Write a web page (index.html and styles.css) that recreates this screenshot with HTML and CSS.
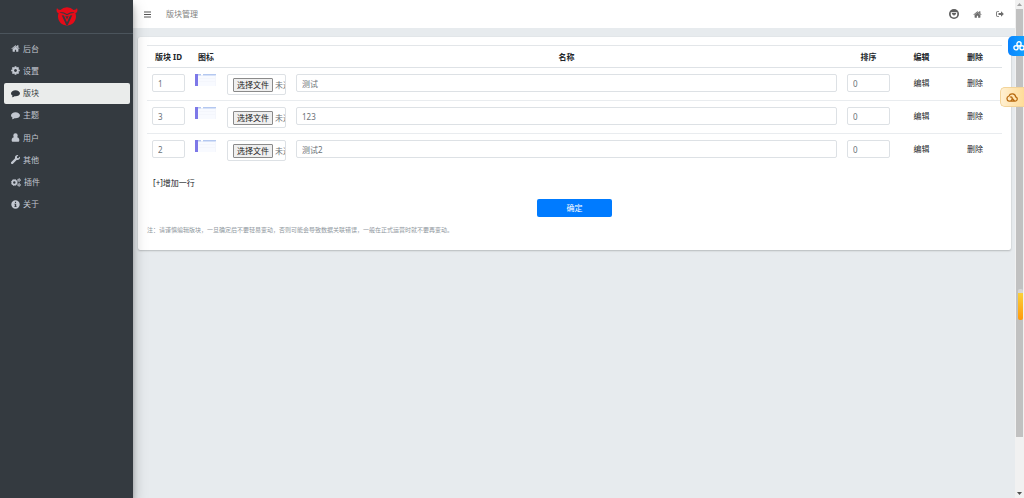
FILE: index.html
```html
<!DOCTYPE html>
<html lang="zh-CN">
<head>
    <meta charset="UTF-8">
    <meta name="viewport" content="width=device-width, initial-scale=1.0">
    <title>版块管理</title>
    <link rel="stylesheet" href="styles.css">
</head>
<body>
    <!-- Shared icons -->
    <svg class="sprite" aria-hidden="true">
        <symbol id="i-home" viewBox="0 0 1792 1792"><path d="M1472 992v480q0 26-19 45t-45 19h-384v-384h-256v384h-384q-26 0-45-19t-19-45v-480q0-1 .5-3t.5-3l575-474 575 474q1 2 1 6zm223-69l-62 74q-8 9-21 11h-3q-13 0-21-7l-692-577-692 577q-12 8-24 7-13-2-21-11l-62-74q-8-10-7-23.500t11-21.500l719-599q32-26 76-26t76 26l244 204v-195q0-14 9-23t23-9h192q14 0 23 9t9 23v408l219 182q10 8 11 21.500t-7 23.500z"/></symbol>
        <symbol id="i-cog" viewBox="100 100 1592 1592"><path d="M1152 896q0-106-75-181t-181-75-181 75-75 181 75 181 181 75 181-75 75-181zm512-109v222q0 12-8 23t-20 13l-185 28q-19 54-39 91 35 50 107 138 10 12 10 25t-9 23q-27 37-99 108t-94 71q-12 0-26-9l-138-108q-44 23-91 38-16 136-29 186-7 28-36 28h-222q-14 0-24.500-8.500t-11.500-21.500l-28-184q-49-16-90-37l-141 107q-10 9-25 9-14 0-25-11-126-114-165-168-7-10-7-23 0-12 8-23 15-21 51-66.500t54-70.500q-27-50-41-99l-183-27q-13-2-21-12.500t-8-23.500v-222q0-12 8-23t19-13l186-28q14-46 39-92-40-57-107-138-10-12-10-24 0-10 9-23 26-36 98.500-107.500t94.500-71.500q13 0 26 10l138 107q44-23 91-38 16-136 29-186 7-28 36-28h222q14 0 24.500 8.500t11.500 21.500l28 184q49 16 90 37l142-107q9-9 24-9 13 0 25 10 129 119 165 170 7 8 7 22 0 12-8 23-15 21-51 66.500t-54 70.500q26 50 41 98l183 28q13 2 21 12.500t8 23.500z"/></symbol>
        <symbol id="i-comment" viewBox="0 0 16 16"><path d="M8 2C3.600 2 0 4.500 0 7.700c0 1.800 1.100 3.400 2.900 4.400-.2 1-.8 1.900-1.500 2.700 2-.2 3.600-.9 4.800-1.900.6.100 1.200.2 1.800.2 4.400 0 8-2.400 8-5.400S12.400 2 8 2z"/></symbol>
        <symbol id="i-user" viewBox="0 0 16 16"><path d="M8 .5a3.900 3.900 0 0 1 3.900 3.900c0 1.200-.4 2.200-1.100 3 2.600.3 4 2.300 4 5.300 0 1.700-.9 2.800-2.400 2.800H3.600c-1.500 0-2.400-1.100-2.400-2.800 0-3 1.400-5 4-5.300-.7-.8-1.100-1.800-1.100-3A3.900 3.900 0 0 1 8 .5z"/></symbol>
        <symbol id="i-wrench" viewBox="0 0 512 512"><path d="M507.730 109.100c-2.240-9.030-13.540-12.090-20.120-5.510l-74.360 74.360-67.880-11.310-11.310-67.880 74.360-74.360c6.620-6.620 3.430-17.900-5.660-20.160-47.380-11.740-99.550.91-136.580 37.930-39.640 39.640-50.550 97.100-34.050 147.200L18.740 402.760c-24.990 24.990-24.990 65.510 0 90.500 24.990 24.990 65.510 24.990 90.500 0l213.210-213.210c50.120 16.710 107.470 5.680 147.370-34.220 37.070-37.070 49.700-89.320 37.910-136.730z"/></symbol>
        <symbol id="i-cogs" viewBox="0 0 18 16">
            <g fill="none" stroke="currentColor">
                <circle cx="6" cy="8" r="3.700" stroke-width="3"/>
                <circle cx="6" cy="8" r="5.500" stroke-width="1.400" stroke-dasharray="2.160 2.160"/>
                <circle cx="14.500" cy="3.700" r="1.900" stroke-width="1.800"/>
                <circle cx="14.500" cy="3.700" r="3" stroke-width="1" stroke-dasharray="1.570 1.570"/>
                <circle cx="14.500" cy="12.300" r="1.900" stroke-width="1.800"/>
                <circle cx="14.500" cy="12.300" r="3" stroke-width="1" stroke-dasharray="1.570 1.570"/>
            </g>
        </symbol>
        <symbol id="i-info" viewBox="0 0 16 16"><path fill-rule="evenodd" d="M8 .5a7.500 7.500 0 1 0 0 15 7.500 7.500 0 0 0 0-15zM7 3h2v2.200H7zM6 6.500h3.200V11H10v1.600H6V11h.8V8H6z"/></symbol>
        <symbol id="i-logout" viewBox="0 0 16 16"><path d="M6 2.500v1.700H3c-.6 0-1 .4-1 1v5.600c0 .6.400 1 1 1h3v1.700H3A2.700 2.700 0 0 1 .3 10.800V5.200A2.700 2.700 0 0 1 3 2.500zM10 2.700 15.700 8 10 13.300V10H5V6h5z"/></symbol>
        <symbol id="i-thumb" viewBox="0 0 21 12">
            <path fill="#f8faff" d="M0 0h21v12H0z"/>
            <path fill="#b4c8f0" d="M3 0h18v1.500H3z"/>
            <path fill="#fff" d="M6 0h2v1.500H6z"/>
            <path fill="#7d78e8" d="M0 0h3v12H0z"/>
            <path fill="#eff2fa" d="M4 4h16v.5H4zM4 7h16v.5H4zM20.500 1.500h.5V12h-.5z"/>
        </symbol>
    </svg>

    <aside class="sidebar">
        <a class="brand" href="#" aria-label="后台首页">
            <svg class="logo" viewBox="0 0 22 19">
                <path fill="#e60b18" d="M1 1C0 3.500.5 5.600 2.600 6.300A9 9 0 0 0 2 9.500c0 5 4 9 9 9s9-4 9-9a9 9 0 0 0-.6-3.200C21.500 5.600 22 3.500 21 1c-.6 1.200-1.700 1.900-3.400 1.900A9.500 9.500 0 0 0 11 .3a9.500 9.500 0 0 0-6.600 2.600C2.700 2.900 1.600 2.200 1 1z"/>
                <path fill="#343a40" d="M3.500 5.700c1.500-.8 3-.5 4.500-.2l3 1.500 3-1.500c1.500-.3 3-.6 4.500.2l-4 .9L11 8.200 7.500 6.600zM5.700 8.200l2.200.2L11 15.200l3.100-6.800 2.200-.2-4.500 9.800h-1.600zM9.300 8.800l1.700.8 1.700-.8L11 12.600z"/>
            </svg>
        </a>
        <nav class="menu">
            <a href="#"><svg class="icon"><use href="#i-home"/></svg>后台</a>
            <a href="#"><svg class="icon"><use href="#i-cog"/></svg>设置</a>
            <a href="#" class="active"><svg class="icon"><use href="#i-comment"/></svg>版块</a>
            <a href="#"><svg class="icon"><use href="#i-comment"/></svg>主题</a>
            <a href="#"><svg class="icon"><use href="#i-user"/></svg>用户</a>
            <a href="#"><svg class="icon"><use href="#i-wrench"/></svg>其他</a>
            <a href="#"><svg class="icon wide"><use href="#i-cogs"/></svg>插件</a>
            <a href="#"><svg class="icon"><use href="#i-info"/></svg>关于</a>
        </nav>
    </aside>

    <div class="wrapper">
        <header class="topbar">
            <button class="toggle" type="button" aria-label="菜单">
                <svg viewBox="0 0 7 7"><path d="M0 .5h7v1H0zM0 3h7v1H0zM0 5.500h7v1H0z"/></svg>
            </button>
            <span class="title">版块管理</span>
            <div class="tools">
                <a href="#" aria-label="前台">
                    <svg class="avatar" viewBox="0 0 20 20">
                        <circle cx="10" cy="10" r="10" fill="#5d5d5d"/>
                        <path fill="#fff" d="M3.500 6.500h13v4a6.500 6.500 0 0 1-13 0z"/>
                        <path fill="#5d5d5d" d="M5.500 8h9L13 11.500h-1.500L10 14l-1.500-2.500H7z"/>
                    </svg>
                </a>
                <a href="#" aria-label="首页"><svg class="icon"><use href="#i-home"/></svg></a>
                <a href="#" aria-label="退出"><svg class="icon small"><use href="#i-logout"/></svg></a>
            </div>
        </header>

        <main class="card">
            <form>
                <table class="forums">
                    <colgroup>
                        <col class="col-id"><col class="col-icon"><col class="col-file"><col>
                        <col class="col-action"><col class="col-action"><col class="col-last">
                    </colgroup>
                    <thead>
                        <tr><th>版块 ID</th><th>图标</th><th></th><th>名称</th><th>排序</th><th>编辑</th><th>删除</th></tr>
                    </thead>
                    <tbody>
                        <tr>
                            <td><input type="text" value="1" aria-label="版块 ID"></td>
                            <td><svg class="thumb"><use href="#i-thumb"/></svg></td>
                            <td><label class="file"><input type="file"><span class="pick">选择文件</span><span>未选择任何文件</span></label></td>
                            <td><input type="text" value="测试" aria-label="名称"></td>
                            <td><input type="text" value="0" aria-label="排序"></td>
                            <td class="action"><a href="#">编辑</a></td>
                            <td class="action"><a href="#">删除</a></td>
                        </tr>
                        <tr>
                            <td><input type="text" value="3" aria-label="版块 ID"></td>
                            <td><svg class="thumb"><use href="#i-thumb"/></svg></td>
                            <td><label class="file"><input type="file"><span class="pick">选择文件</span><span>未选择任何文件</span></label></td>
                            <td><input type="text" value="123" aria-label="名称"></td>
                            <td><input type="text" value="0" aria-label="排序"></td>
                            <td class="action"><a href="#">编辑</a></td>
                            <td class="action"><a href="#">删除</a></td>
                        </tr>
                        <tr>
                            <td><input type="text" value="2" aria-label="版块 ID"></td>
                            <td><svg class="thumb"><use href="#i-thumb"/></svg></td>
                            <td><label class="file"><input type="file"><span class="pick">选择文件</span><span>未选择任何文件</span></label></td>
                            <td><input type="text" value="测试2" aria-label="名称"></td>
                            <td><input type="text" value="0" aria-label="排序"></td>
                            <td class="action"><a href="#">编辑</a></td>
                            <td class="action"><a href="#">删除</a></td>
                        </tr>
                    </tbody>
                </table>
                <a class="add-row" href="#">[+]增加一行</a>
                <button class="submit" type="submit">确定</button>
                <p class="note">注：请谨慎编辑版块，一旦确定后不要轻易变动，否则可能会导致数据关联错误，一般在正式运营时就不要再变动。</p>
            </form>
        </main>
    </div>

    <!-- Scroll track -->
    <div class="track">
        <svg viewBox="0 0 9 9"><path fill="#a3a3a3" d="M2 6l2.500-3L7 6z"/></svg>
        <div class="thumb-bar"></div>
        <svg viewBox="0 0 9 9"><path fill="#505050" d="M2 3l2.500 3L7 3z"/></svg>
    </div>

    <!-- Floating widgets -->
    <button class="float cloud" type="button" aria-label="云盘">
        <svg viewBox="0 0 12 10" fill="none" stroke="#fff" stroke-width="1.400"><circle cx="3" cy="6.800" r="2.100"/><circle cx="6" cy="2.900" r="2.100"/><circle cx="9" cy="6.800" r="2.100"/></svg>
    </button>
    <button class="float backup" type="button" aria-label="备份">
        <svg viewBox="0 0 12 10" fill="none" stroke="#b86a10" stroke-width="1.300" stroke-linecap="round"><path d="M3 9.200h6.200a2.200 2.200 0 0 0 .5-4.300A3.600 3.600 0 0 0 2.900 4 2.700 2.700 0 0 0 3 9.200c2 0 3.200-1.200 3.200-2.600S5.200 4.600 4.400 5M6.500 6.800 8.500 9"/></svg>
    </button>
    <div class="gauge"></div>
</body>
</html>
```
FILE: styles.css
```css
* {
    box-sizing: border-box;
}

body {
    margin: 0;
    min-height: 100vh;
    display: flex;
    background-color: #e7ebee;
    color: #212529;
    font-family: "Noto Sans", "Noto Sans CJK SC", sans-serif;
    font-size: 8px;
    line-height: 12px;
}

a {
    color: inherit;
    text-decoration: none;
}

button,
input {
    font: inherit;
}

.sprite {
    position: absolute;
    width: 0;
    height: 0;
}

.icon {
    width: 9px;
    height: 9px;
    fill: currentColor;
}

.icon.wide {
    width: 10px;
}

.icon.small {
    width: 8px;
    height: 8px;
}

/* Sidebar */
.sidebar {
    flex: 0 0 133px;
    z-index: 2;
    background-color: #343a40;
    color: #c2c7d0;
    box-shadow: 0 7px 14px rgba(0,0,0,0.25), 0 5px 5px rgba(0,0,0,0.22);
}

.brand {
    display: flex;
    align-items: center;
    justify-content: center;
    height: 34px;
    border-bottom: 1px solid #4b545c;
}

.logo {
    width: 22px;
    height: 19px;
}

.menu {
    display: grid;
    grid-auto-rows: 21px;
    align-content: space-between;
    height: 177px;
    margin: 4px 3px 0 4px;
}

.menu a {
    display: flex;
    align-items: center;
    gap: 3px;
    padding: 0 7px;
    border-radius: 2px;
}

.menu a.active {
    background-color: #eaeceb;
    color: #343a40;
}

/* Top bar */
.wrapper {
    flex: 1;
    min-width: 0;
    padding-right: 9px;
}

.topbar {
    display: flex;
    align-items: center;
    height: 28px;
    padding: 0 11px;
    background-color: #fff;
    color: #6c6c6c;
}

.toggle {
    width: 7px;
    height: 7px;
    margin-right: 15px;
    padding: 0;
    border: none;
    background: none;
}

.toggle svg {
    display: block;
    fill: #555;
}

.title {
    color: #808080;
}

.tools {
    display: flex;
    align-items: center;
    gap: 14px;
    margin-left: auto;
}

.tools a {
    display: flex;
}

.avatar {
    width: 10px;
    height: 10px;
}

/* Content */
.card {
    margin: 9px 4px 0 5px;
    padding: 8px 9px 14px;
    background-color: #fff;
    border-radius: 2px;
    box-shadow: 0 0 1px rgba(0,0,0,0.13), 0 1px 2px rgba(0,0,0,0.2);
}

.forums {
    width: 100%;
    table-layout: fixed;
    border-spacing: 0;
}

.col-id {
    width: 43px;
}

.col-icon {
    width: 32px;
}

.col-file {
    width: 69px;
}

.col-action {
    width: 53px;
}

.col-last {
    width: 54px;
}

.forums th {
    height: 23px;
    padding: 0;
    border-top: 1px solid #e3e6e9;
    border-bottom: 1px solid #dee2e6;
    font-weight: bold;
    white-space: nowrap;
}

.forums td {
    height: 33px;
    padding: 6px 5px 5px;
    border-bottom: 1px solid #e9ecef;
    vertical-align: top;
}

.forums tr:last-child td {
    border-bottom: none;
}

.forums td.action {
    padding-top: 9px;
    text-align: center;
}

.forums input[type="text"] {
    display: block;
    width: 100%;
    height: 18px;
    padding: 0 5px;
    border: 1px solid #dde1e5;
    border-radius: 2px;
    color: #6b7177;
}

.thumb {
    display: block;
    width: 21px;
    height: 12px;
}

.file {
    display: flex;
    align-items: center;
    gap: 2px;
    height: 21px;
    padding: 0 0 0 5px;
    overflow: hidden;
    border: 1px solid #dde1e5;
    border-radius: 2px;
    color: #6b7177;
    white-space: nowrap;
}

.file input {
    position: absolute;
    width: 1px;
    height: 1px;
    opacity: 0;
}

.pick {
    padding: 0 3px;
    background-color: #efefef;
    border: 1px solid #8a8a8a;
    border-radius: 1px;
    color: #222;
}

.add-row {
    display: block;
    width: max-content;
    margin: 10px 0 0 6px;
}

.submit {
    display: block;
    width: 75px;
    height: 18px;
    margin: 10px auto 0;
    padding: 0;
    border: none;
    border-radius: 2px;
    background-color: #007bff;
    color: #fff;
}

.note {
    margin: 7px 0 0;
    color: #8f979e;
    font-size: 6px;
}

/* Scroll track */
.track {
    position: fixed;
    top: 0;
    right: 0;
    bottom: 0;
    display: flex;
    flex-direction: column;
    width: 9px;
    background-color: #f1f1f1;
}

.track svg {
    flex: none;
    height: 9px;
}

.track svg:last-child {
    margin-top: auto;
}

.thumb-bar {
    height: 86%;
    margin: 0 1px;
    background-color: #c1c1c1;
}

/* Floating widgets */
.float {
    position: fixed;
    right: 0;
    display: flex;
    align-items: center;
    height: 20px;
    padding: 0 0 0 5px;
    overflow: hidden;
    border: none;
    border-radius: 5px 0 0 5px;
}

.float svg {
    flex: none;
    width: 12px;
    height: 10px;
}

.cloud {
    top: 36px;
    width: 16px;
    background-image: linear-gradient(90deg, #0a84ff, #10a0ff);
}

.backup {
    top: 87px;
    width: 24px;
    background-image: linear-gradient(90deg, #fff0d2, #ffdc98);
    border: 1px solid #f3d49a;
    border-right: none;
}

.gauge {
    position: fixed;
    top: 289px;
    right: 1px;
    width: 5px;
    height: 31px;
    border-radius: 2px;
    background: linear-gradient(#d5d5d5 4px, #fbd03a 4px, #ff9a0c);
}
```
